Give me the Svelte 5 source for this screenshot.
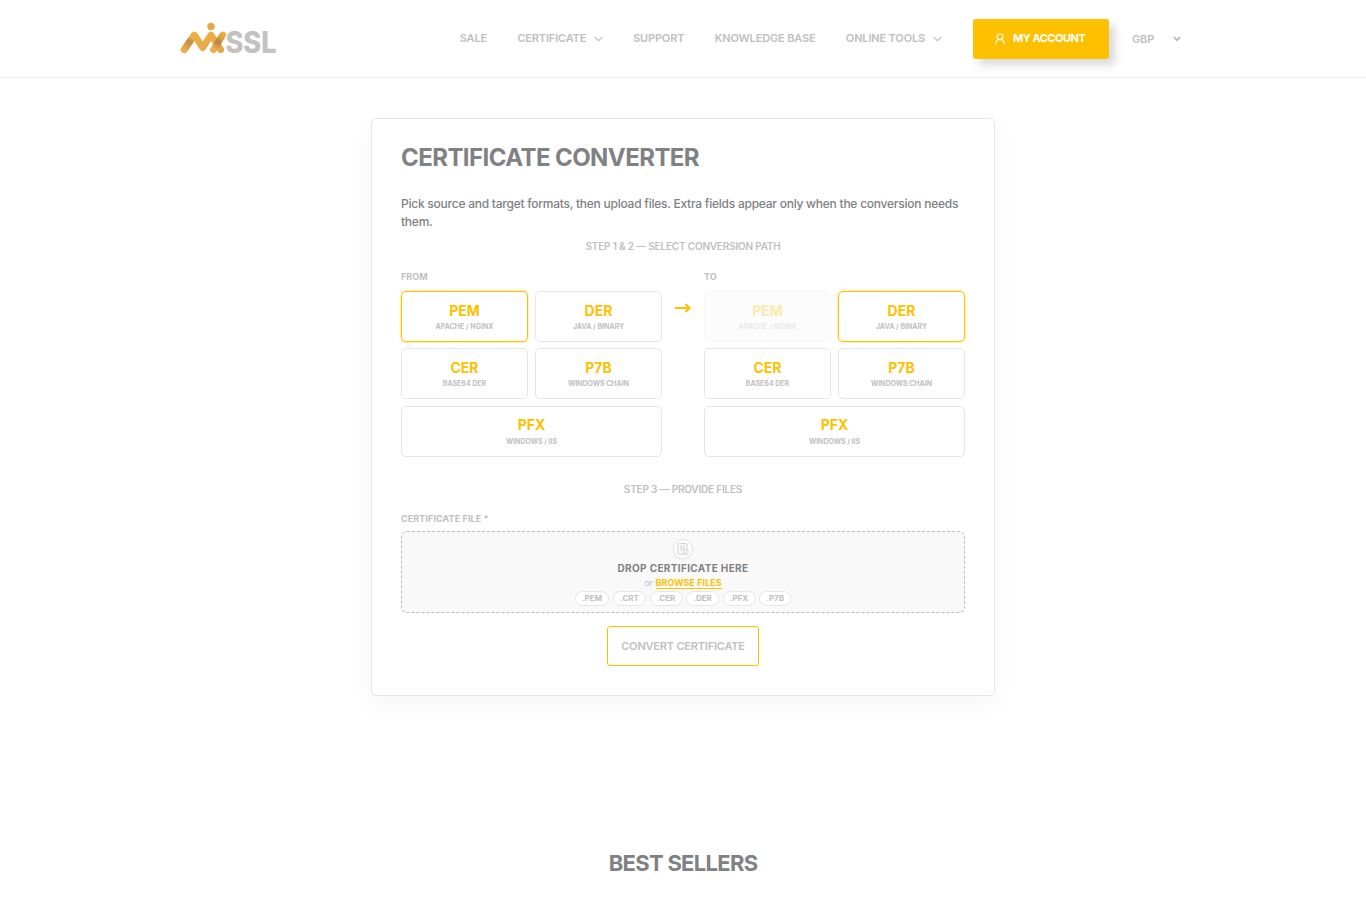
<script>
  const formats = [
    { name: 'PEM', note: 'APACHE / NGINX' },
    { name: 'DER', note: 'JAVA / BINARY' },
    { name: 'CER', note: 'BASE64 DER' },
    { name: 'P7B', note: 'WINDOWS CHAIN' },
    { name: 'PFX', note: 'WINDOWS / IIS' }
  ];
  const extensions = ['.PEM', '.CRT', '.CER', '.DER', '.PFX', '.P7B'];
  let from = $state('PEM');
  let to = $state('DER');
</script>

{#snippet chevron()}
  <svg class="chevron" width="9" height="6" viewBox="0 0 9 6"><path d="M.7 .8 4.5 4.6 8.3 .8" /></svg>
{/snippet}

{#snippet grid(selected, disabled, pick)}
  <div class="formats">
    {#each formats as f}
      <button class="format" class:active={f.name === selected} disabled={f.name === disabled} onclick={() => pick(f.name)}>
        <strong>{f.name}</strong>
        <small>{f.note}</small>
      </button>
    {/each}
  </div>
{/snippet}

<header>
  <div class="bar">
    <svg class="logo" width="98" height="36" viewBox="0 0 98 36" aria-label="NixSSL">
      <defs>
        <linearGradient id="gold" x1="0" y1="0" x2="1" y2="1"><stop offset="0" stop-color="#efb142" /><stop offset="1" stop-color="#e3a84e" /></linearGradient>
        <linearGradient id="foot" gradientUnits="userSpaceOnUse" x1="3" y1="30" x2="12" y2="18"><stop offset="0" stop-color="#eeb046" /><stop offset=".75" stop-color="#c28c4a" /><stop offset="1" stop-color="#eeb142" /></linearGradient>
        <linearGradient id="cross" gradientUnits="userSpaceOnUse" x1="34" y1="29" x2="43" y2="15"><stop offset="0" stop-color="#eeb046" /><stop offset=".45" stop-color="#b98549" /><stop offset="1" stop-color="#ecb041" /></linearGradient>
      </defs>
      <g fill="none" stroke-width="6.8" stroke-linecap="round" stroke-linejoin="round">
        <path stroke="url(#gold)" d="M4.3 29.7 14.3 15 22.7 27.7 31 15 40.7 29.7" />
        <path stroke="url(#foot)" d="M4.3 29.7 10.5 20.5" />
        <path stroke="url(#cross)" d="M33.5 29.7 42.7 15" />
      </g>
      <circle cx="31" cy="6.4" r="3.7" fill="#e6a94a" />
      <text x="45.5" y="33" textLength="51" lengthAdjust="spacingAndGlyphs">SSL</text>
    </svg>
    <nav>
      <a href="#sale">SALE</a>
      <a href="#cert"><span>CERTIFICATE</span>{@render chevron()}</a>
      <a href="#support">SUPPORT</a>
      <a href="#kb">KNOWLEDGE BASE</a>
      <a href="#tools"><span>ONLINE TOOLS</span>{@render chevron()}</a>
    </nav>
    <a class="account" href="#account">
      <svg width="10" height="12" viewBox="0 0 10 12">
        <circle cx="5" cy="3.6" r="2.9" fill="none" stroke="#fff" stroke-width="1.1" />
        <path d="M0.8 11.6V10.6C0.8 8.3 2.5 6.5 5 6.5C7.5 6.5 9.2 8.3 9.2 10.6V11.6" fill="none" stroke="#fff" stroke-width="1.1" />
      </svg>
      <span>MY ACCOUNT</span>
    </a>
    <div class="currency"><span>GBP</span><svg width="8" height="6" viewBox="0 0 8 6"><path d="M.8 1 4 4.2 7.2 1" /></svg></div>
  </div>
</header>

<main>
  <section class="card">
    <h1>CERTIFICATE CONVERTER</h1>
    <p class="intro">Pick source and target formats, then upload files. Extra fields appear only when the conversion needs<br />them.</p>
    <p class="step">STEP 1 &amp; 2 — SELECT CONVERSION PATH</p>
    <div class="path">
      <div>
        <div class="label">FROM</div>
        {@render grid(from, null, (n) => (from = n))}
      </div>
      <svg class="arrow" width="16" height="12" viewBox="0 0 16 12"><path d="M0 6H14.5M10.4 2 14.6 6 10.4 10" /></svg>
      <div>
        <div class="label">TO</div>
        {@render grid(to, from, (n) => (to = n))}
      </div>
    </div>
    <p class="step files">STEP 3 — PROVIDE FILES</p>
    <div class="label wide">CERTIFICATE FILE *</div>
    <div class="drop">
      <span class="badge">
        <svg width="12" height="12" viewBox="0 0 12 12"><rect x="1" y=".6" width="9" height="10.4" rx="1.2" /><path d="M3 3.2H8M3 5.2H8M3 7.2H5.5" /><circle cx="8.8" cy="8.8" r="2.5" fill="#fff" /><path d="M7.7 8.8 8.5 9.6 9.9 8" /></svg>
      </span>
      <div class="drop-title">DROP CERTIFICATE HERE</div>
      <div class="browse"><span>or</span> <a href="#browse">BROWSE FILES</a></div>
      <div class="exts">{#each extensions as e}<span>{e}</span>{/each}</div>
    </div>
    <button class="convert">CONVERT CERTIFICATE</button>
  </section>
  <h2>BEST SELLERS</h2>
</main>

<style>
  :global(body) { margin: 0; background: #fff; overflow: hidden; }
  :global(#app) { font-family: Inter, "Liberation Sans", sans-serif; color: #c0c0c0; }
  a { color: inherit; text-decoration: none; }
  button { font: inherit; color: inherit; margin: 0; }
  p, h1, h2 { margin: 0; }
  svg { display: block; fill: none; flex: none; }
  header { height: 77px; border-bottom: 1px solid #f2f2f2; }
  .bar { display: flex; align-items: center; height: 77px; width: 1004px; margin-left: 180px; }
  .logo { margin-bottom: 1px; overflow: visible; }
  .logo text { fill: #c4c1c1; font-size: 29.5px; font-weight: 800; }
  nav { display: flex; gap: 30.4px; width: 481px; margin-left: 181.7px; margin-bottom: 2px; font-size: 11px; font-weight: 600; letter-spacing: -.16px; }
  nav a { display: flex; align-items: center; gap: 7.5px; white-space: nowrap; }
  .chevron { margin-top: 2px; }
  .chevron path { stroke: #c0c0c0; stroke-width: 1.2; }
  .account { display: flex; align-items: center; box-sizing: border-box; flex: none; width: 136px; height: 40px; margin-left: 32.3px; padding-left: 22px; gap: 8px; border-radius: 3px; background: #ffc000; color: #fff; font-size: 11px; font-weight: 700; letter-spacing: -.48px; box-shadow: 6px 6px 9px rgba(0,0,0,.15); white-space: nowrap; }
  .account span { margin-bottom: 2px; }
  .currency { display: flex; align-items: center; justify-content: space-between; flex: none; width: 49px; margin-left: 23px; font-size: 11px; font-weight: 600; letter-spacing: -.1px; }
  .currency svg { stroke: #b8b8b8; stroke-width: 1.7; }
  main { display: flex; flex-direction: column; align-items: center; padding-top: 40px; }
  .card { box-sizing: border-box; width: 624px; height: 578px; padding: 24px 29px 0; border: 1px solid #e6e6e6; border-radius: 5px; background: #fff; box-shadow: 0 8px 24px rgba(0,0,0,.04); }
  h1 { font-size: 24px; line-height: 30px; font-weight: 700; letter-spacing: -.57px; color: #808184; white-space: nowrap; }
  .intro { margin-top: 22px; font-size: 12px; line-height: 18px; font-weight: 500; letter-spacing: -.243px; color: #808184; white-space: nowrap; }
  .step { margin-top: 8px; height: 14px; line-height: 14px; font-size: 10px; font-weight: 600; letter-spacing: -.19px; text-align: center; }
  .files { margin-top: 25px; margin-bottom: 17px; }
  .path { display: flex; justify-content: space-between; margin-top: 18px; }
  .path > div { width: 261px; }
  .label { height: 12px; line-height: 12px; font-size: 9px; font-weight: 700; }
  .wide { letter-spacing: .1px; }
  .formats { display: grid; grid-template-columns: 127px 127px; gap: 6.4px 7px; margin-top: 7.8px; }
  .format { box-sizing: border-box; height: 51px; padding: 0; display: flex; flex-direction: column; align-items: center; justify-content: center; border: 1px solid #e6e6e6; border-radius: 5px; background: #fff; }
  .format:last-child { grid-column: span 2; }
  .format strong { font-size: 14px; line-height: 18px; font-weight: 700; color: #ffc000; }
  .format small { font-size: 7px; line-height: 9px; margin-top: 2.5px; font-weight: 700; }
  .active { border-color: #ffc000; box-shadow: 0 0 3px rgba(255,192,0,.6); }
  .format:disabled { opacity: .35; background: #f7f7f7; }
  .arrow { margin-top: 31px; stroke: #ffc000; stroke-width: 2.1; }
  .drop { box-sizing: border-box; height: 82px; margin-top: 6.5px; padding-top: 7px; border: 1px dashed #bdbdbd; border-radius: 6px; background: #f9f9f9; display: flex; flex-direction: column; align-items: center; }
  .badge { display: grid; place-items: center; box-sizing: border-box; width: 20px; height: 20px; border: 1px solid #e6e6e6; border-radius: 50%; background: #fff; box-shadow: 0 1px 3px rgba(0,0,0,.06); }
  .badge svg { stroke: #c8c8c8; stroke-width: .9; }
  .drop-title { margin-top: 2px; line-height: 14px; font-size: 10px; font-weight: 700; letter-spacing: .35px; color: #808184; }
  .browse { padding-top: 1px; line-height: 14px; height: 15px; font-size: 9px; }
  .browse a { color: #ffc000; font-weight: 700; letter-spacing: .05px; border-bottom: 1px solid #ffc000; }
  .exts { display: flex; gap: 3.4px; }
  .exts span { box-sizing: border-box; height: 15px; line-height: 13px; padding: 0 6.3px; border: 1px solid #e6e6e6; border-radius: 8px; background: #fff; font-size: 8px; font-weight: 700; }
  .convert { display: block; width: 152px; height: 40px; padding: 0; margin: 13px auto 0; border: 1px solid #ffc000; border-radius: 3px; background: #fff; font-size: 11px; font-weight: 600; letter-spacing: -.2px; white-space: nowrap; }
  h2 { margin-top: 152px; font-size: 22px; line-height: 30px; font-weight: 700; letter-spacing: -.7px; color: #808184; }
</style>
